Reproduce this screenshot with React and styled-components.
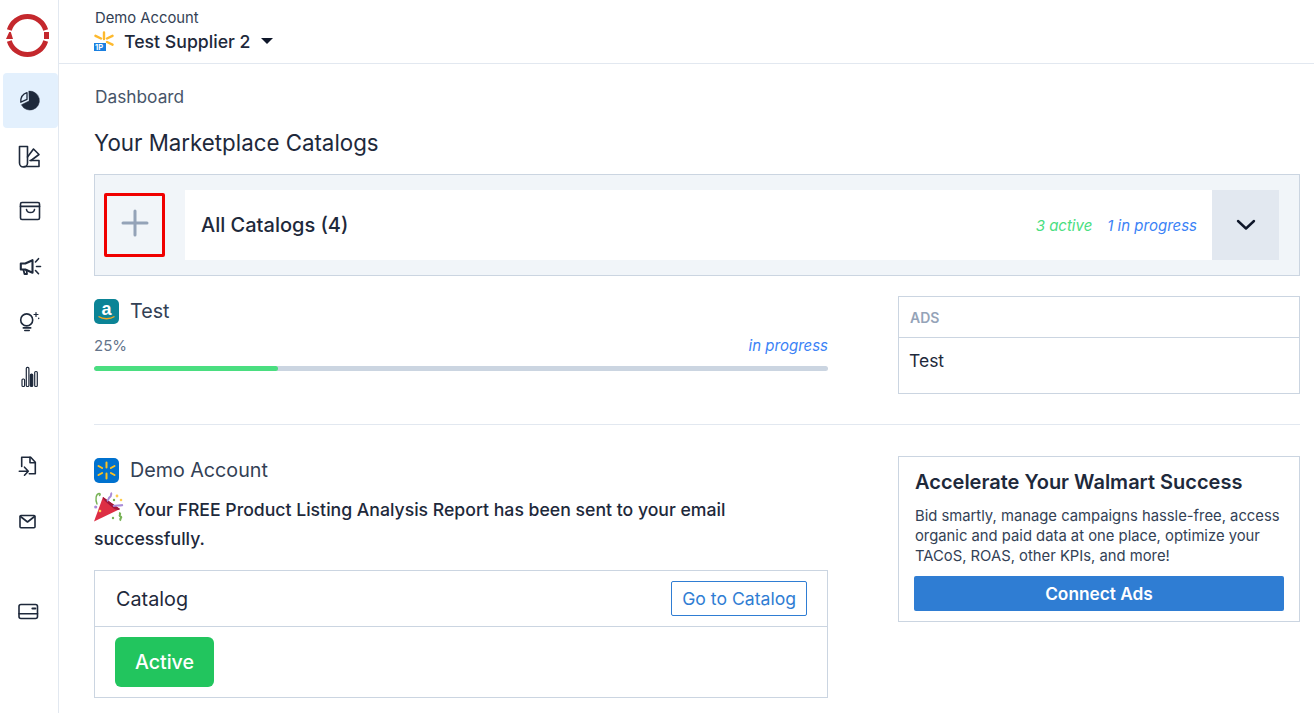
import React from "react"
import styled, { createGlobalStyle } from "styled-components"

const GlobalStyle = createGlobalStyle`
* {
  box-sizing: border-box;
  margin: 0;
}

html,
body {
  margin: 0;
  background: #fff;
  color: #0f172a;
  font-family: Inter, "Liberation Sans", sans-serif;
  overflow: hidden;
}
`

const Page = styled.div`
  display: flex;
  width: 1314px;
  height: 713px;
  overflow: hidden;
`

const Sidebar = styled.nav`
  width: 59px;
  flex: none;
  border-right: 1px solid #e2e8f0;
  padding-top: 13px;
  display: flex;
  flex-direction: column;
  align-items: flex-end;
`

const Logo = styled.div`
  width: 58px;
  height: 60px;
  padding-left: 5px;
`

const NavItem = styled.div`
  width: 55px;
  height: 55px;
  flex: none;
  display: flex;
  align-items: center;
  justify-content: center;
  padding-right: 1px;
  border-radius: 4px;
  color: #1e293b;
  background: ${(p) => (p.$active ? "#e3f0fd" : "transparent")};
  margin-top: ${(p) => p.$gap || 0}px;
`

const Main = styled.main`
  flex: 1;
  min-width: 0;
`

const TopBar = styled.header`
  height: 64px;
  padding: 9px 0 0 35px;
  border-bottom: 1px solid #e2e8f0;
`

const AccountLabel = styled.div`
  padding-left: 1px;
  font-size: 14.8px;
  line-height: 18px;
  color: #334155;
`

const SupplierRow = styled.div`
  display: flex;
  align-items: center;
  height: 28px;
  font-size: 17.7px;
  font-weight: 500;
  color: #1e293b;
`

const SupplierName = styled.span`
  margin: 0 10px 0 10px;
`

const Caret = styled.span`
  width: 0;
  height: 0;
  border-left: 6.5px solid transparent;
  border-right: 6.5px solid transparent;
  border-top: 6.5px solid #0f172a;
`

const Content = styled.div`
  padding: 0 14px 0 35px;
`

const Crumb = styled.div`
  margin-top: 23px;
  padding-left: 1px;
  font-size: 17.3px;
  line-height: 20px;
  color: #475569;
`

const PageTitle = styled.h1`
  margin-top: 21.5px;
  font-size: 22.3px;
  line-height: 28px;
  font-weight: 400;
  color: #1e293b;
`

const CatalogBar = styled.section`
  margin-top: 17.5px;
  height: 102px;
  display: flex;
  align-items: center;
  padding: 0 20px 0 9px;
  background: #f1f5f9;
  border: 1px solid #cbd5e1;
`

const AddButton = styled.div`
  width: 61px;
  height: 64px;
  flex: none;
  display: flex;
  align-items: center;
  justify-content: center;
  padding-bottom: 4px;
  color: #94a3b8;
  border: 3px solid #f00000;
  border-radius: 2px;
  margin: 0 20px 1px 0;
`

const BarBody = styled.div`
  flex: 1;
  height: 70px;
  display: flex;
  align-items: center;
  background: #fff;
  padding-left: 16px;
`

const BarTitle = styled.div`
  flex: 1;
  font-size: 20px;
  font-weight: 500;
  color: #1e293b;
`

const Status = styled.span`
  font-size: 15px;
  font-style: italic;
  color: ${(p) => p.$color};
  margin-right: ${(p) => p.$gap}px;
`

const ChevronBox = styled.div`
  width: 67px;
  height: 70px;
  flex: none;
  display: flex;
  align-items: center;
  justify-content: center;
  background: #e2e8f0;
  color: #0f172a;
`

const Split = styled.div`
  display: grid;
  grid-template-columns: 734px 402px;
  justify-content: space-between;
  align-items: start;
`

const TestSplit = styled(Split)`
  padding: 23px 0 30px;
  border-bottom: 1px solid #e2e8f0;
`

const DemoSplit = styled(Split)`
  padding-top: 33px;
`

const MarketHeading = styled.div`
  display: flex;
  align-items: center;
  gap: 11px;
  height: 25px;
  font-size: 19.7px;
  color: #334155;
`

const HeadingText = styled.span`
  margin-bottom: 2px;
`

const ProgressLabels = styled.div`
  display: flex;
  justify-content: space-between;
  margin-top: 12px;
  font-size: 15px;
  line-height: 20px;
  color: #64748b;
`

const ProgressText = styled.span`
  font-style: italic;
  font-size: 15px;
  color: #3b82f6;
`

const Track = styled.div`
  height: 5px;
  margin-top: 10px;
  border-radius: 3px;
  background: #cbd5e1;
  overflow: hidden;
`

const Fill = styled.div`
  height: 100%;
  border-radius: 3px;
  background: #4ade80;
`

const AdsBox = styled.div`
  margin-top: -3px;
  height: 98px;
  border: 1px solid #cbd5e1;
`

const AdsHead = styled.div`
  height: 41px;
  padding-left: 11px;
  display: flex;
  align-items: center;
  font-size: 14px;
  font-weight: 600;
  color: #94a3b8;
  border-bottom: 1px solid #cbd5e1;
`

const AdsBody = styled.div`
  padding: 13px 11px 13px 10px;
  font-size: 17.5px;
  line-height: 20px;
  color: #1e293b;
`

const Notice = styled.p`
  margin-top: 9px;
  font-size: 17.65px;
  line-height: 29px;
  font-weight: 500;
  color: #1e293b;
`

const Popper = styled.svg`
  width: 30px;
  height: 30px;
  vertical-align: -6px;
  margin-right: 10px;
`

const CatalogCard = styled.div`
  margin-top: 17px;
  height: 128px;
  border: 1px solid #cbd5e1;
`

const CardHead = styled.div`
  height: 56px;
  padding: 0 20px 0 21px;
  display: flex;
  align-items: center;
  justify-content: space-between;
  font-size: 19.8px;
  color: #1e293b;
  border-bottom: 1px solid #cbd5e1;
`

const OutlineButton = styled.div`
  height: 35px;
  padding: 0 10px;
  display: flex;
  align-items: center;
  font-size: 17.6px;
  color: #2f7dd3;
  border: 1px solid #2f7dd3;
  border-radius: 2px;
`

const CardBody = styled.div`
  padding: 10px 20px;
`

const ActiveBadge = styled.div`
  width: 99px;
  height: 50px;
  display: flex;
  align-items: center;
  justify-content: center;
  font-size: 19.6px;
  font-weight: 500;
  color: #fff;
  background: #22c55e;
  border-radius: 6px;
`

const PromoCard = styled.aside`
  height: 166px;
  margin-top: -2px;
  padding: 12px 15px 0 15px;
  border: 1px solid #cbd5e1;
`

const PromoTitle = styled.h2`
  padding-left: 1px;
  font-size: 20px;
  line-height: 26px;
  font-weight: 600;
  color: #1e293b;
`

const PromoText = styled.p`
  margin-top: 11px;
  padding-left: 1px;
  font-size: 14.8px;
  line-height: 20px;
  color: #334155;
`

const ConnectButton = styled.div`
  height: 35px;
  margin-top: 10px;
  display: flex;
  align-items: center;
  justify-content: center;
  font-size: 17.3px;
  font-weight: 600;
  color: #fff;
  background: #2f7dd3;
  border-radius: 2px;
`

const Icon = ({ children }) => (
  <svg
    width="24"
    height="24"
    viewBox="0 0 24 24"
    fill="none"
    stroke="currentColor"
    strokeWidth="1.6"
    strokeLinecap="round"
    strokeLinejoin="round"
  >
    {children}
  </svg>
)

const navIcons = [
  {
    active: true,
    icon: (
      <Icon>
        <path d="M11 2.100A9.500 9.500 0 1 1 3.400 15.800L11 12z" fill="currentColor" strokeWidth="0.5" />
        <path d="M9 3.600v6.800l-6.200 2.800C2.500 8.600 5 4.800 9 3.600z" strokeWidth="1.3" />
      </Icon>
    ),
  },
  {
    icon: (
      <Icon>
        <path d="M1.500 2.500h8V19a3.500 3.500 0 0 1-8 0z" />
        <path d="M9.500 13l6-8 5.500 5.500-8 6" />
        <path d="M12 16.500h9v6H6" />
      </Icon>
    ),
  },
  {
    icon: (
      <Icon>
        <rect x="2.500" y="3.500" width="19" height="17" rx="1.500" />
        <path d="M2.500 7.300h19" strokeWidth="1.800" />
        <path d="M8.500 10.500c.5 4 7.500 4 8 0" />
      </Icon>
    ),
  },
  {
    icon: (
      <Icon>
        <path d="M2.800 9.500h4.500L14.500 6.200v12.600l-7.200-3.300H2.800z" strokeWidth="2.100" />
        <path d="M5.500 16l1 4h2.500l-.5-4" strokeWidth="1.800" />
        <path d="M17.500 8l3-3.300M18.500 12.500h4M17.500 16.500l3 3.200" />
      </Icon>
    ),
  },
  {
    icon: (
      <Icon>
        <circle cx="8.700" cy="10.900" r="6" />
        <path d="M5.300 18.900h7.400" />
        <path d="M6.800 21.500h4.400" />
        <path d="M18 3.500v4M16 5.500h4" strokeWidth="1.200" />
        <path d="M20.700 9.200v.3" strokeWidth="1.400" />
      </Icon>
    ),
  },
  {
    icon: (
      <Icon>
        <rect x="4" y="15" width="2.600" height="7.500" rx="1" strokeWidth="1.200" />
        <rect x="8.300" y="3.400" width="2.600" height="19.100" rx="1" strokeWidth="1.200" />
        <rect x="12.400" y="10" width="2.300" height="12.500" rx="1" fill="currentColor" strokeWidth="1.200" />
        <rect x="16.700" y="7.500" width="2.600" height="15" rx="1" strokeWidth="1.200" />
      </Icon>
    ),
  },
  {
    gap: 35,
    icon: (
      <Icon>
        <path d="M3.700 12.500V3.200h9l4.600 5v11.600h-6" />
        <path d="M12 3.200v5.600h5.300" />
        <path d="M1.300 17.200h9M6.500 13.200l3.800 4-3.800 4" />
      </Icon>
    ),
  },
  {
    icon: (
      <Icon>
        <rect x="2" y="6.500" width="15" height="12.300" rx="1" />
        <path d="M2.500 7.500L9.500 13l7-5.500" />
      </Icon>
    ),
  },
  {
    gap: 36,
    icon: (
      <Icon>
        <rect x="1" y="4.500" width="18.500" height="14" rx="2" />
        <path d="M1 13.800h18.500" />
        <path d="M14.500 8.500h2.800" strokeWidth="2.200" />
      </Icon>
    ),
  },
]

const App = () => {
  return (
    <>
      <GlobalStyle />
      <Page>
        <Sidebar>
          <Logo>
            <svg width="46" height="46" viewBox="0 0 46 46" fill="none">
              <path d="M4.300 17a19 19 0 0 1 36.400 0" stroke="#c4282d" strokeWidth="5" />
              <path d="M4.300 28a19 19 0 0 0 36.400 0" stroke="#c4282d" strokeWidth="5" />
              <path d="M1 26l3.200-7h1.600L8 26z" fill="#c4282d" />
              <path d="M39 19h5v7h-5z" fill="#c4282d" />
            </svg>
          </Logo>
          {navIcons.map((item, i) => (
            <NavItem key={i} $active={item.active} $gap={item.gap}>
              {item.icon}
            </NavItem>
          ))}
        </Sidebar>
        <Main>
          <TopBar>
            <AccountLabel>Demo Account</AccountLabel>
            <SupplierRow>
              <svg width="20" height="20" viewBox="0 0 20 20">
                <path d="M10 1.500v6.500M1.500 4.800l5.500 2.700M18.500 4.800L13 7.500M13 11l5.500 2.700" stroke="#fdb92e" strokeWidth="2.400" strokeLinecap="round" />
                <rect x="0" y="12" width="12" height="8" fill="#1a7fe0" />
                <text x="1" y="18.800" fontSize="7.500" fontWeight="700" fill="#fff" fontFamily="Inter">1P</text>
              </svg>
              <SupplierName>Test Supplier 2</SupplierName>
              <Caret />
            </SupplierRow>
          </TopBar>
          <Content>
            <Crumb>Dashboard</Crumb>
            <PageTitle>Your Marketplace Catalogs</PageTitle>
            <CatalogBar>
              <AddButton>
                <svg width="30" height="30" viewBox="0 0 30 30" stroke="currentColor" strokeWidth="3" strokeLinecap="round">
                  <path d="M15 3v24M3 15h24" />
                </svg>
              </AddButton>
              <BarBody>
                <BarTitle>All Catalogs (4)</BarTitle>
                <Status $color="#4ade80" $gap={15}>3 active</Status>
                <Status $color="#3b82f6" $gap={15}>1 in progress</Status>
                <ChevronBox>
                  <svg width="20" height="20" viewBox="0 0 20 20" fill="none" stroke="currentColor" strokeWidth="2.400" strokeLinecap="round" strokeLinejoin="round">
                    <path d="M2 6l8 7.500L18 6" />
                  </svg>
                </ChevronBox>
              </BarBody>
            </CatalogBar>
            <TestSplit>
              <div>
                <MarketHeading>
                  <svg width="25" height="25" viewBox="0 0 25 25">
                    <rect width="25" height="25" rx="5" fill="#0b8496" />
                    <text x="12.500" y="15.500" textAnchor="middle" fontSize="18" fontWeight="700" fill="#fff" fontFamily="Liberation Sans">a</text>
                    <path d="M4.500 17.500c4.500 3 11.500 3 16 0" stroke="#f5a623" strokeWidth="1.300" fill="none" />
                  </svg>
                  <HeadingText>Test</HeadingText>
                </MarketHeading>
                <ProgressLabels>
                  <span>25%</span>
                  <ProgressText>in progress</ProgressText>
                </ProgressLabels>
                <Track>
                  <Fill style={{ width: "25%" }} />
                </Track>
              </div>
              <AdsBox>
                <AdsHead>ADS</AdsHead>
                <AdsBody>Test</AdsBody>
              </AdsBox>
            </TestSplit>
            <DemoSplit>
              <div>
                <MarketHeading>
                  <svg width="25" height="25" viewBox="0 0 25 25">
                    <rect width="25" height="25" rx="5" fill="#0071ce" />
                    <path d="M12.500 4.500v5M12.500 15.500v5M4.500 8l3.600 2M20.500 8l-3.600 2M4.500 17l3.600-2M20.500 17l-3.600-2" stroke="#ffc220" strokeWidth="2" strokeLinecap="round" />
                  </svg>
                  <HeadingText>Demo Account</HeadingText>
                </MarketHeading>
                <Notice>
                  <Popper viewBox="0 0 30 30">
                    <path d="M0 29.500L9 5l17 12z" fill="#dd2e44" />
                    <path d="M9 5l17 12c-2 2.500-7-.5-10.500-4S8 7 9 5z" fill="#a0173a" />
                    <path d="M3 12C1 7 2 2 5 1.500c1.500 0 1.500 1.500.5 2" stroke="#77b255" strokeWidth="1.400" fill="none" strokeLinecap="round" />
                    <path d="M13 9c2-1 1-3 3-4s0-3 2-4" stroke="#aa8dd8" strokeWidth="2" fill="none" />
                    <path d="M19 14c3-1 6 0 10-1" stroke="#aa8dd8" strokeWidth="2" fill="none" />
                    <path d="M25 21c3 .5-1 2.500 1.500 3.500s-2 2 .5 4" stroke="#77b255" strokeWidth="2" fill="none" />
                    <circle cx="1.700" cy="15" r="1.600" fill="#aa8dd8" />
                    <circle cx="23" cy="4" r="1.400" fill="#ffcc4d" />
                    <circle cx="27" cy="8" r="1.300" fill="#ffcc4d" />
                    <circle cx="20" cy="8" r="1.200" fill="#77b255" />
                    <circle cx="19" cy="26" r="1.200" fill="#77b255" />
                    <circle cx="6" cy="19" r="1.300" fill="#ffcc4d" />
                  </Popper>
                  Your FREE Product Listing Analysis Report has been sent to your email successfully.
                </Notice>
                <CatalogCard>
                  <CardHead>
                    Catalog
                    <OutlineButton>Go to Catalog</OutlineButton>
                  </CardHead>
                  <CardBody>
                    <ActiveBadge>Active</ActiveBadge>
                  </CardBody>
                </CatalogCard>
              </div>
              <PromoCard>
                <PromoTitle>Accelerate Your Walmart Success</PromoTitle>
                <PromoText>
                  Bid smartly, manage campaigns hassle-free, access organic and paid data at one place, optimize your TACoS, ROAS, other KPIs, and more!
                </PromoText>
                <ConnectButton>Connect Ads</ConnectButton>
              </PromoCard>
            </DemoSplit>
          </Content>
        </Main>
      </Page>
    </>
  )
}

export default App
